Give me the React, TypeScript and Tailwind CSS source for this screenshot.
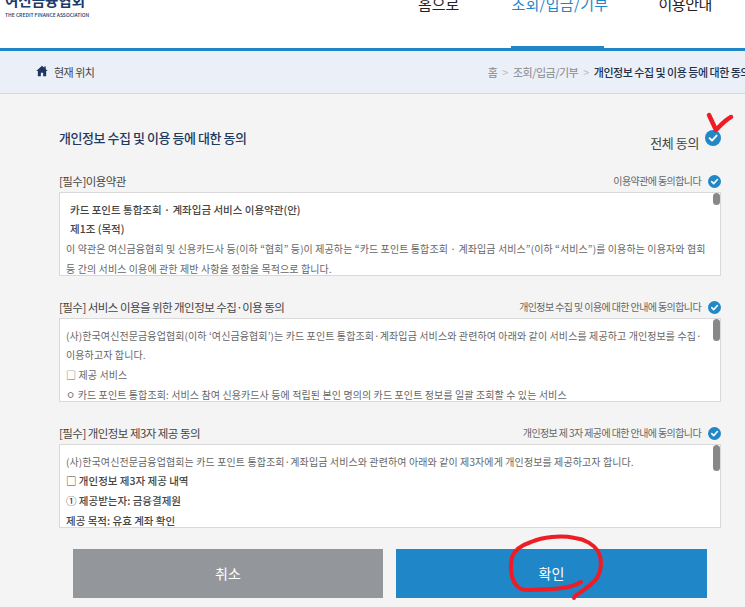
const font = { fontFamily: '"Noto Sans CJK KR", "Noto Sans", sans-serif' };

function Check({ size }: { size: number }) {
  return (
    <svg width={size} height={size} viewBox="0 0 16 16" className="shrink-0">
      <circle cx="8" cy="8" r="8" fill="#2187c7" />
      <path d="M4.6 8.2 7 10.6 11.6 5.6" fill="none" stroke="#fff" strokeWidth="1.9" strokeLinecap="round" strokeLinejoin="round" />
    </svg>
  );
}

function Terms({
  label,
  agree,
  thumb,
  lines,
  gapClass,
}: {
  label: string;
  agree: string;
  thumb: string;
  lines: { text: string; cls: string }[];
  gapClass: string;
}) {
  return (
    <section className={gapClass}>
      <div className="flex h-[22px] items-center justify-between">
        <span className="mt-[2px] text-[11.5px] tracking-[-0.55px] text-[#444]">{label}</span>
        <span className="flex items-center gap-[7px]">
          <span className="mb-[2px] text-[10px] tracking-[-0.6px] text-[#666]">{agree}</span>
          <Check size={13} />
        </span>
      </div>
      <div className="relative h-[84px] overflow-hidden border border-[#d9d9d9] bg-white pl-[6px] pt-[6.5px]">
        {lines.map((l) => (
          <p key={l.text} className={`h-[19.7px] whitespace-nowrap leading-[19.7px] ${l.cls}`}>
            {l.text}
          </p>
        ))}
        <div className={`absolute right-0 top-0 w-[7px] rounded-full bg-[#888] ${thumb}`} />
      </div>
    </section>
  );
}

const body = "text-[10px] tracking-[0.1px] text-[#666]";
const strong = "text-[10.5px] font-medium text-[#444]";

export default function App() {
  return (
    <div className="relative h-[607px] w-[745px] overflow-hidden bg-[#f4f4f4]" style={font}>
      <header className="flex h-[51px] items-start justify-between overflow-hidden border-b-[3px] border-[#1f86c8] bg-white">
        <div className="ml-[5px] flex flex-col">
          <span className="mt-[-9px] h-[19px] text-[14.5px] font-bold leading-[18px] text-[#1c3a6b]">여신금융협회</span>
          <span className="mt-[2px] text-[5px] font-medium leading-[6px] text-[#1c3a6b]">THE CREDIT FINANCE ASSOCIATION</span>
        </div>
        <nav className="flex h-[48px] text-[15px] leading-[22px] text-[#222]">
          <span className="mr-[52px] mt-[-7px]">홈으로</span>
          <span className="relative mr-[54px] h-[48px] w-[93px] whitespace-nowrap text-center tracking-[0.3px] text-[#1f86c8]">
            <span className="relative top-[-7px]">조회/입금/기부</span>
            <span className="absolute bottom-0 left-0 h-[2px] w-full bg-[#1f86c8]" />
          </span>
          <span className="mr-[33px] mt-[-7px] tracking-[-0.4px]">이용안내</span>
        </nav>
      </header>

      <div className="flex h-[43px] items-center justify-between overflow-hidden border-b border-[#d5d9de] bg-[#eaeff8] pl-[36px]">
        <div className="flex items-center gap-[6px]">
          <svg width="12" height="12" viewBox="0 0 24 24" fill="#1f3560" className="mt-[-2px]">
            <path d="M12 1.5 0.5 12h3.2v10.5h6v-7h4.6v7h6V12h3.2l-4-3.7V3h-3v2.6z" />
          </svg>
          <span className="text-[11px] tracking-[-0.5px] text-[#444]">현재 위치</span>
        </div>
        <div className="flex shrink-0 items-center whitespace-nowrap text-[11px] tracking-[-0.5px] text-[#888]">
          <span>홈</span>
          <span className="mx-[5px] text-[#bbb]">&gt;</span>
          <span>조회/입금/기부</span>
          <span className="mx-[5px] text-[#bbb]">&gt;</span>
          <span className="mr-[-5px] font-medium text-[#22304a]">개인정보 수집 및 이용 등에 대한 동의</span>
        </div>
      </div>

      <main className="pl-[59px] pr-[24px]">
        <div className="flex h-[76px] justify-between">
          <h1 className="mt-[34px] text-[13px] font-medium leading-[20px] tracking-[-0.45px] text-[#1e3a5f]">개인정보 수집 및 이용 등에 대한 동의</h1>
          <div className="mt-[36px] flex items-start gap-[6px]">
            <span className="mt-[2px] text-[13px] leading-[22px] tracking-[-0.4px] text-[#444]">전체 동의</span>
            <Check size={16} />
          </div>
        </div>
        <Terms
          gapClass=""
          label="[필수]이용약관"
          agree="이용약관에 동의합니다"
          thumb="h-[12px]"
          lines={[
            { text: "카드 포인트 통합조회 · 계좌입금 서비스 이용약관(안)", cls: `pl-[4px] ${strong}` },
            { text: "제1조 (목적)", cls: `pl-[4px] ${strong}` },
            { text: "이 약관은 여신금융협회 및 신용카드사 등(이하 “협회” 등)이 제공하는 “카드 포인트 통합조회 · 계좌입금 서비스”(이하 “서비스”)를 이용하는 이용자와 협회", cls: body },
            { text: "등 간의 서비스 이용에 관한 제반 사항을 정함을 목적으로 합니다.", cls: body },
          ]}
        />
        <Terms
          gapClass="mt-[20px]"
          label="[필수] 서비스 이용을 위한 개인정보 수집·이용 동의"
          agree="개인정보 수집 및 이용에 대한 안내에 동의합니다"
          thumb="h-[22px]"
          lines={[
            { text: "(사)한국여신전문금융업협회(이하 ‘여신금융협회’)는 카드 포인트 통합조회·계좌입금 서비스와 관련하여 아래와 같이 서비스를 제공하고 개인정보를 수집·", cls: body },
            { text: "이용하고자 합니다.", cls: body },
            { text: "□ 제공 서비스", cls: body },
            { text: "ㅇ 카드 포인트 통합조회: 서비스 참여 신용카드사 등에 적립된 본인 명의의 카드 포인트 정보를 일괄 조회할 수 있는 서비스", cls: body },
          ]}
        />
        <Terms
          gapClass="mt-[20px]"
          label="[필수] 개인정보 제3자 제공 동의"
          agree="개인정보 제 3자 제공에 대한 안내에 동의합니다"
          thumb="h-[26px]"
          lines={[
            { text: "(사)한국여신전문금융업협회는 카드 포인트 통합조회·계좌입금 서비스와 관련하여 아래와 같이 제3자에게 개인정보를 제공하고자 합니다.", cls: body },
            { text: "□ 개인정보 제3자 제공 내역", cls: strong },
            { text: "① 제공받는자: 금융결제원", cls: strong },
            { text: "제공 목적: 유효 계좌 확인", cls: strong },
          ]}
        />
        <div className="ml-[14px] mt-[21px] flex gap-[13px]">
          <button className="h-[49px] w-[310px] bg-[#93979b] text-[14px] text-white">취소</button>
          <button className="h-[49px] w-[311px] bg-[#1f86c8] text-[14px] text-white">확인</button>
        </div>
      </main>

      <svg className="pointer-events-none absolute left-0 top-0" width="745" height="607" viewBox="0 0 745 607" fill="none">
        <path d="M709 115 L716 130 C720 126 725 120 731 117" stroke="#ee1c25" strokeWidth="4.5" strokeLinecap="round" strokeLinejoin="round" />
        <path
          d="M581 582 C570 589 556 589 530 590 C524 590 522 590 518 587 C510 580 510 565 512 557 C515 549 522 545 531 542 C543 537 560 535 575 538 C585 539 594 545 598 551 C602 559 602 569 597 578 C591 586 583 590 578 594 C575 596 574 597 574 598"
          stroke="#ee1c25"
          strokeWidth="4"
          strokeLinecap="round"
          strokeLinejoin="round"
        />
      </svg>
    </div>
  );
}
